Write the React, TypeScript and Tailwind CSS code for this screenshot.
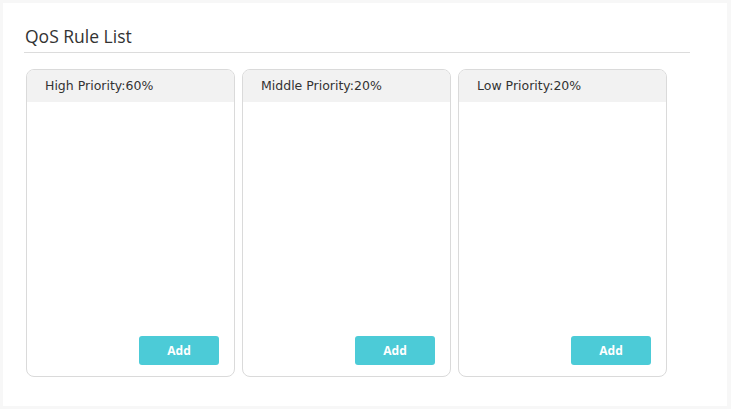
const cards = [
  { label: "High Priority:60%" },
  { label: "Middle Priority:20%" },
  { label: "Low Priority:20%" },
];

export default function App() {
  return (
    <div className="w-[731px] h-[409px] bg-[#f7f7f7] p-[3px] pr-[4px]">
      <div className="h-full bg-white pl-[21px] pr-[37px] pt-[22px]">
        <h2 className="text-[17.5px] leading-[22px] text-[#333] pl-[1px] font-['Open_Sans',sans-serif]">
          QoS Rule List
        </h2>
        <div className="mt-[5px] border-b border-[#dcdcdc]" />
        <div className="mt-[16px] pl-[2px] flex gap-[7px]">
          {cards.map((c) => (
            <div
              key={c.label}
              className="w-[209px] h-[308px] rounded-[8px] border border-[#dadada] overflow-hidden flex flex-col"
            >
              <div className="h-[32px] bg-[#f2f2f2] pl-[18px] flex items-center text-[12.5px] text-[#333] font-['DejaVu_Sans',sans-serif]">
                {c.label}
              </div>
              <div className="flex-1 flex items-end justify-end pr-[15px] pb-[11px]">
                <button className="w-[80px] h-[29px] rounded-[3px] bg-[#4ccbd7] text-white text-[12px] font-bold font-['Open_Sans',sans-serif]">
                  Add
                </button>
              </div>
            </div>
          ))}
        </div>
      </div>
    </div>
  );
}
